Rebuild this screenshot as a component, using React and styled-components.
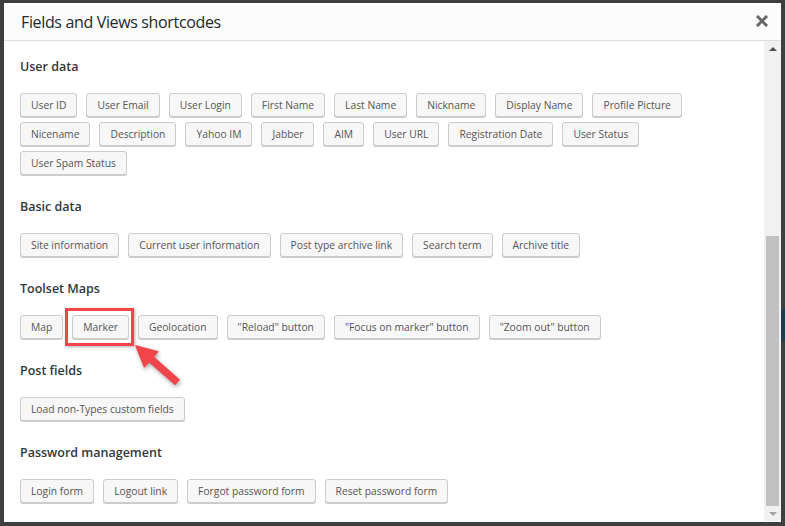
import React from "react";
import styled, { createGlobalStyle, css } from "styled-components";

const GlobalStyle = createGlobalStyle`
  html, body {
    margin: 0;
    padding: 0;
    background: #3f3f3f;
  }
  body {
    font-family: "Open Sans", "Noto Sans", sans-serif;
  }
`;

const sections = [
  {
    title: "User data",
    items: [
      "User ID",
      "User Email",
      "User Login",
      "First Name",
      "Last Name",
      "Nickname",
      "Display Name",
      "Profile Picture",
      "Nicename",
      "Description",
      "Yahoo IM",
      "Jabber",
      "AIM",
      "User URL",
      "Registration Date",
      "User Status",
      "User Spam Status",
    ],
  },
  {
    title: "Basic data",
    items: [
      "Site information",
      "Current user information",
      "Post type archive link",
      "Search term",
      "Archive title",
    ],
  },
  {
    title: "Toolset Maps",
    items: [
      "Map",
      { label: "Marker", marked: true },
      "Geolocation",
      "\"Reload\" button",
      "\"Focus on marker\" button",
      "\"Zoom out\" button",
    ],
  },
  {
    title: "Post fields",
    items: ["Load non-Types custom fields"],
  },
  {
    title: "Password management",
    items: ["Login form", "Logout link", "Forgot password form", "Reset password form"],
  },
];

const App = () => (
  <>
    <GlobalStyle />
    <Page>
      <Dialog>
        <Header>
          <Title>Fields and Views shortcodes</Title>
          <Close viewBox="0 0 12 12" width="12" height="12" aria-label="close">
            <path d="M2 2 L10 10 M10 2 L2 10" stroke="#666" strokeWidth="3" strokeLinecap="square" />
          </Close>
        </Header>
        <Body>
          <Content>
            {sections.map((section) => (
              <Group key={section.title}>
                <GroupTitle>{section.title}</GroupTitle>
                <Buttons>
                  {section.items.map((item) => {
                    const label = typeof item === "string" ? item : item.label;
                    const marked = typeof item !== "string" && item.marked;
                    return (
                      <Slot key={label} $marked={marked}>
                        <ShortcodeButton>{label}</ShortcodeButton>
                        {marked && (
                          <Arrow viewBox="0 0 50 45" width="50" height="45">
                            <polygon
                              points="4,3 25.6,8.7 21,13.9 47,36.8 43,41.2 17,18.5 12.4,23.7"
                              fill="#f0454b"
                              stroke="#f0454b"
                              strokeWidth="1.5"
                              strokeLinejoin="round"
                            />
                          </Arrow>
                        )}
                      </Slot>
                    );
                  })}
                </Buttons>
              </Group>
            ))}
          </Content>
          <Scrollbar>
            <ScrollArrow $up />
            <Track>
              <Thumb />
            </Track>
            <ScrollArrow />
          </Scrollbar>
        </Body>
      </Dialog>
      <Edge>
        <EdgeBlock />
      </Edge>
    </Page>
  </>
);

export default App;

const Page = styled.div`
  display: flex;
  width: 785px;
  height: 526px;
  padding: 3px 0 0 4px;
  box-sizing: border-box;
  overflow: hidden;
`;

const Dialog = styled.div`
  display: flex;
  flex-direction: column;
  width: 777px;
  height: 519px;
  background: #fff;
`;

const Header = styled.div`
  display: flex;
  align-items: center;
  justify-content: space-between;
  height: 37px;
  padding: 0 13px 0 17px;
  background: #fcfcfc;
  border-bottom: 1px solid #dddddd;
  flex-shrink: 0;
`;

const Title = styled.h1`
  margin: 0;
  font-size: 16px;
  font-weight: 400;
  letter-spacing: -0.35px;
  color: #23282d;
`;

const Close = styled.svg`
  display: block;
  margin-top: -1px;
`;

const Body = styled.div`
  flex: 1;
  display: flex;
  min-height: 0;
`;

const Content = styled.div`
  flex: 1;
  padding: 16px 0 0 16px;
`;

const Group = styled.section`
  margin-bottom: 22px;
`;

const GroupTitle = styled.h3`
  margin: 0 0 16px;
  font-size: 12.5px;
  line-height: 20px;
  font-weight: 600;
  color: #32373c;
`;

const Buttons = styled.div`
  display: flex;
  flex-wrap: wrap;
  gap: 5px 9px;
  max-width: 720px;
`;

const Slot = styled.div`
  position: relative;
  display: flex;

  ${({ $marked }) =>
    $marked &&
    css`
      &::before {
        content: "";
        position: absolute;
        left: -7px;
        right: -5px;
        top: -7px;
        bottom: -7px;
        border: 3px solid #f0454b;
        box-shadow: 1px 1px 3px rgba(0, 0, 0, 0.3);
        pointer-events: none;
      }
    `}
`;

const ShortcodeButton = styled.button`
  height: 24px;
  margin: 0;
  padding: 0 10px;
  border: 1px solid #cccccc;
  border-radius: 3px;
  background: #f7f7f7;
  box-shadow: 0 1px 0 #cccccc;
  font-family: "Open Sans", "Noto Sans", sans-serif;
  font-size: 10.3px;
  color: #555;
  line-height: 22px;
  white-space: nowrap;
  cursor: pointer;
`;

const Arrow = styled.svg`
  position: absolute;
  left: 60px;
  top: 28px;
  overflow: visible;
  filter: drop-shadow(1px 2px 2px rgba(0, 0, 0, 0.35));
`;

const Scrollbar = styled.div`
  display: flex;
  flex-direction: column;
  width: 17px;
  margin-bottom: 1px;
  background: #f1f1f1;
`;

const ScrollArrow = styled.div`
  height: 15px;
  display: flex;
  align-items: center;
  justify-content: center;

  &::after {
    content: "";
    border-left: 4px solid transparent;
    border-right: 4px solid transparent;
    ${({ $up }) =>
      $up
        ? css`
            border-bottom: 4px solid #505050;
          `
        : css`
            border-top: 4px solid #a3a3a3;
          `}
  }
`;

const Track = styled.div`
  flex: 1;
  display: flex;
  flex-direction: column;
  justify-content: flex-end;
  padding: 0 2px;
`;

const Thumb = styled.div`
  height: 270px;
  background: #c1c1c1;
`;

const Edge = styled.div`
  flex: 1;
  display: flex;
  flex-direction: column;
  padding-top: 306px;
`;

const EdgeBlock = styled.div`
  height: 32px;
  background: #1e3c4c;
`;
